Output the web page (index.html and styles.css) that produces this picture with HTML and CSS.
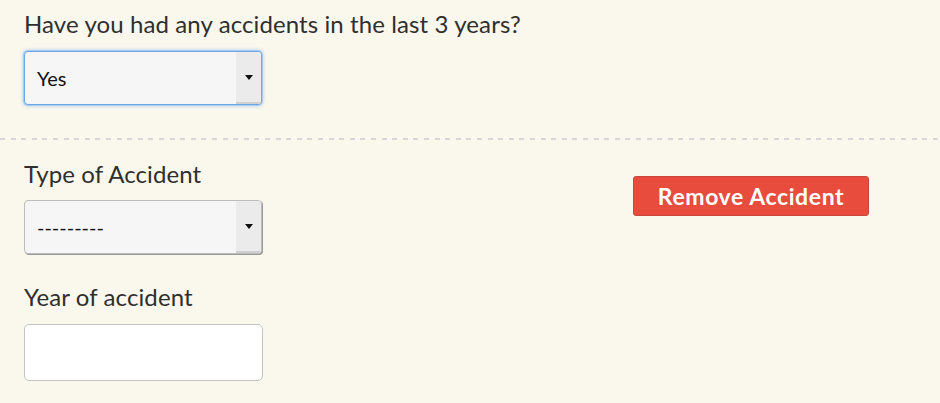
FILE: index.html
```html
<!DOCTYPE html>
<html lang="en">
<head>
<meta charset="utf-8">
<title>Accidents</title>
<link rel="stylesheet" href="styles.css">
</head>
<body>
<div class="page">
  <section class="question">
    <label class="label">Have you had any accidents in the last 3 years?</label>
    <div class="select is-focused"><span class="select-value">Yes</span><span class="select-arrow"><i class="caret"></i></span></div>
  </section>
  <div class="divider"></div>
  <section class="accident">
    <div class="fields">
      <label class="label">Type of Accident</label>
      <div class="select"><span class="select-value">---------</span><span class="select-arrow"><i class="caret"></i></span></div>
      <label class="label label-year">Year of accident</label>
      <div class="text-input"></div>
    </div>
    <div class="actions">
      <button class="btn-remove" type="button">Remove Accident</button>
    </div>
  </section>
</div>
</body>
</html>
```
FILE: styles.css
```css
html, body {
  margin: 0;
  padding: 0;
  background: #faf7ec;
}
body {
  font-family: Lato, "Open Sans", "Liberation Sans", sans-serif;
  color: #333;
}
.page {
  width: 940px;
  height: 403px;
  overflow: hidden;
}
.question {
  padding: 10px 0 0 24px;
}
.label {
  display: block;
  font-size: 24px;
  line-height: 28px;
  color: #2f2f2f;
  letter-spacing: 0.1px;
}
.select {
  box-sizing: border-box;
  width: 238px;
  height: 54px;
  margin-top: 13px;
  display: flex;
  align-items: stretch;
  background: #f6f6f6;
  border: 1px solid #bdbdbd;
  border-radius: 4px;
  overflow: hidden;
  box-shadow: 1px 1px 0 #9a9a9a;
}
.select.is-focused {
  border-color: #6ea7e6;
  box-shadow: 0 0 0 1px #a9cbf1, 0 0 4px #86b6ee;
}
.select-value {
  flex: 1;
  padding-left: 12px;
  display: flex;
  align-items: center;
  font-size: 20px;
  color: #111;
}
.select-arrow {
  width: 25px;
  display: flex;
  align-items: center;
  justify-content: center;
  background: #ebebeb;
  border-bottom: 2px solid #d0d0d0;
}
.caret {
  width: 0;
  height: 0;
  border-left: 4px solid transparent;
  border-right: 4px solid transparent;
  border-top: 5px solid #111;
}
.divider {
  height: 2px;
  margin-top: 33px;
  background: repeating-linear-gradient(to right, #d7d7d7 0 5px, transparent 5px 10.6px);
}
.accident {
  display: flex;
  padding: 20px 0 0 24px;
}
.fields {
  width: 609px;
}
.accident .select {
  margin-top: 12px;
}
.label-year {
  margin-top: 29px;
}
.text-input {
  box-sizing: border-box;
  width: 239px;
  height: 57px;
  margin-top: 13px;
  background: #fff;
  border: 1px solid #c4c4c4;
  border-radius: 5px;
}
.actions {
  padding-top: 16px;
}
.btn-remove {
  box-sizing: border-box;
  width: 236px;
  height: 40px;
  background: #e74c3c;
  border: 1px solid #c7473a;
  border-radius: 3px;
  color: #fff;
  font-family: Lato, "Open Sans", "Liberation Sans", sans-serif;
  font-weight: 700;
  font-size: 23px;
  letter-spacing: 0.6px;
  padding: 0;
}
```
